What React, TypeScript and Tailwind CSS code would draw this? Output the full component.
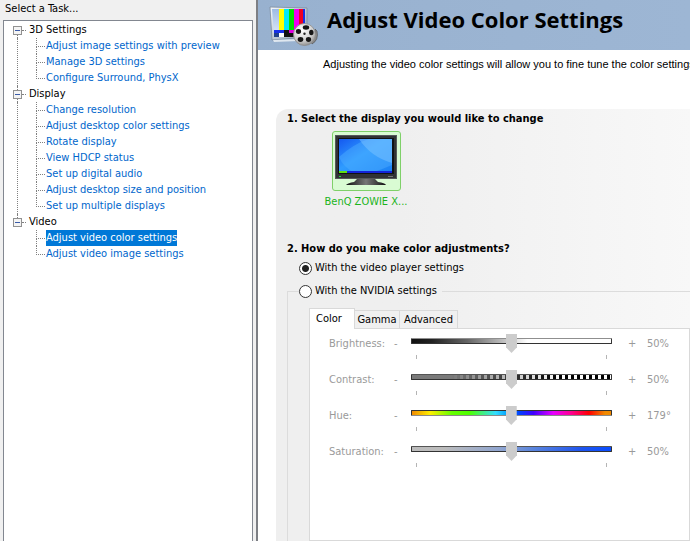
type Group = { title: string; items: string[] };

const groups: Group[] = [
  {
    title: "3D Settings",
    items: [
      "Adjust image settings with preview",
      "Manage 3D settings",
      "Configure Surround, PhysX",
    ],
  },
  {
    title: "Display",
    items: [
      "Change resolution",
      "Adjust desktop color settings",
      "Rotate display",
      "View HDCP status",
      "Set up digital audio",
      "Adjust desktop size and position",
      "Set up multiple displays",
    ],
  },
  {
    title: "Video",
    items: ["Adjust video color settings", "Adjust video image settings"],
  },
];

const selected = "Adjust video color settings";

const sliders = [
  {
    label: "Brightness:",
    value: 50,
    max: 100,
    text: "50%",
    track:
      "[&::-webkit-slider-runnable-track]:border-t-[#8f8f8f] [&::-webkit-slider-runnable-track]:bg-[linear-gradient(to_right,#111_0%,#222_10%,#666_28%,#bbb_45%,#fff_58%,#fff_100%)]",
  },
  {
    label: "Contrast:",
    value: 50,
    max: 100,
    text: "50%",
    track:
      "[&::-webkit-slider-runnable-track]:border-t-[#555] [&::-webkit-slider-runnable-track]:bg-[linear-gradient(to_right,#7a7a7a_0%,#7a7a7a_20%,transparent_75%),repeating-linear-gradient(to_right,#fff_0px,#fff_3px,#000_3px,#000_6px)]",
  },
  {
    label: "Hue:",
    value: 179,
    max: 359,
    text: "179°",
    track:
      "[&::-webkit-slider-runnable-track]:border-b-[#8a8a8a] [&::-webkit-slider-runnable-track]:bg-[linear-gradient(to_right,#f08a00_0%,#ffee00_9%,#66ff00_20%,#4dff00_29%,#33ddff_42%,#00a0ff_48%,#0040ff_54%,#4000ff_61%,#e800ff_71%,#ff0090_80%,#ff0000_89%,#f08a00_97%)]",
  },
  {
    label: "Saturation:",
    value: 50,
    max: 100,
    text: "50%",
    track:
      "[&::-webkit-slider-runnable-track]:border-t-[#555] [&::-webkit-slider-runnable-track]:bg-[linear-gradient(to_right,#bcbcbc_0%,#bcbcbc_16%,#8ea4d0_45%,#5c86dc_60%,#1f55ee_85%,#0a4dff_100%)]",
  },
];

function TaskTree() {
  return (
    <ul className="pt-px">
      {groups.map((group, g) => {
        const first = g === 0;
        const last = g === groups.length - 1;
        return (
          <li key={group.title}>
            <div className="flex h-4 items-center pl-[9px]">
              <div className="flex h-4 w-[9px] flex-col items-center">
                <span className={first ? "h-1" : "h-1 border-l border-dotted border-[#808080]"} />
                <button
                  type="button"
                  aria-label={"Collapse " + group.title}
                  className="flex size-[9px] shrink-0 items-center justify-center border border-[#919191] bg-[#f4f4f4]"
                >
                  <span className="h-px w-[5px] bg-[#3a5ba8]" />
                </button>
                <span className={last ? "flex-1" : "flex-1 border-l border-dotted border-[#808080]"} />
              </div>
              <span className="w-1 border-t border-dotted border-[#808080]" />
              <span className="pl-[3px] leading-4 text-black">{group.title}</span>
            </div>
            <ul
              className={
                last
                  ? "ml-[13px] border-l border-transparent pl-[18px]"
                  : "ml-[13px] border-l border-dotted border-[#808080] pl-[18px]"
              }
            >
              {group.items.map((item, i) => (
                <li key={item} className="flex h-4 items-center">
                  <div className="flex h-4 w-[9px] flex-col">
                    <span className="h-[9px] border-b border-l border-dotted border-[#808080]" />
                    <span
                      className={
                        i === group.items.length - 1
                          ? "flex-1"
                          : "flex-1 border-l border-dotted border-[#808080]"
                      }
                    />
                  </div>
                  <a
                    href="#"
                    className={
                      item === selected
                        ? "ml-px bg-[#0078d7] leading-4 whitespace-nowrap text-white"
                        : "ml-px leading-4 whitespace-nowrap text-[#0066cc]"
                    }
                  >
                    {item}
                  </a>
                </li>
              ))}
            </ul>
          </li>
        );
      })}
    </ul>
  );
}

function VideoIcon() {
  return (
    <svg width="50" height="43" viewBox="0 0 50 43" aria-hidden="true" className="shrink-0">
      <defs>
        <linearGradient id="frame" x1="0" y1="0" x2="1" y2="1">
          <stop offset="0" stopColor="#f4f8fc" />
          <stop offset="1" stopColor="#8fa0b4" />
        </linearGradient>
        <linearGradient id="glass" x1="0" y1="0" x2="0" y2="1">
          <stop offset="0" stopColor="#9dbbe4" />
          <stop offset="1" stopColor="#e4eefa" />
        </linearGradient>
        <radialGradient id="reel" cx="0.4" cy="0.3" r="0.8">
          <stop offset="0" stopColor="#ffffff" />
          <stop offset="0.6" stopColor="#cfcfcf" />
          <stop offset="1" stopColor="#7c7c7c" />
        </radialGradient>
      </defs>
      <path d="M1 3 L38 4 L38 33 L3 36 Z" fill="url(#frame)" stroke="#7c8a9a" strokeWidth="0.8" />
      <path d="M3 5 H10 V33 H5 Z" fill="url(#glass)" />
      <path d="M10 5 H15 V26 H10Z" fill="#ffff00" />
      <path d="M15 5 H20 V26 H15Z" fill="#00e8f8" />
      <path d="M20 5 H25 V26 H20Z" fill="#00e000" />
      <path d="M25 5 H30 V26 H25Z" fill="#f000f0" />
      <path d="M30 5 H34 V26 H30Z" fill="#f00020" />
      <path d="M34 5 H36 V26 H34Z" fill="#1830e8" />
      <path d="M5 26 H15 V29 H5Z" fill="#1830e8" />
      <path d="M15 26 H20 V29 H15Z" fill="#111" />
      <path d="M20 26 H26 V29 H20Z" fill="#e000e0" />
      <path d="M5 29 H10 V33 H5Z" fill="#20408c" />
      <path d="M10 29 H15 V33 H10Z" fill="#fff" />
      <path d="M15 29 H26 V33 H15Z" fill="#111" />
      <path d="M4 36 L30 35 L30 37 L5 38 Z" fill="#dfe7ef" />
      <path d="M42 37 Q47 34 46 25 L48 27 Q50 36 43 40 Z" fill="#8a8a8a" stroke="#4a4a4a" strokeWidth="0.6" />
      <circle cx="35.5" cy="30.5" r="11" fill="url(#reel)" stroke="#8c8c8c" strokeWidth="0.8" />
      <ellipse cx="37" cy="23.5" rx="3.2" ry="2.2" fill="#161616" />
      <ellipse cx="29.5" cy="27.5" rx="2.6" ry="2.4" fill="#161616" />
      <ellipse cx="42.3" cy="28.5" rx="2.2" ry="2.8" fill="#161616" />
      <ellipse cx="31.5" cy="35.5" rx="2.8" ry="2.4" fill="#161616" />
      <ellipse cx="39.5" cy="35.5" rx="2.6" ry="2.4" fill="#161616" />
      <circle cx="35.5" cy="29.8" r="1.2" fill="#222" />
    </svg>
  );
}

function MonitorIcon() {
  return (
    <svg width="62" height="52" viewBox="0 0 62 52" aria-hidden="true">
      <defs>
        <linearGradient id="screen" x1="0" y1="0" x2="1" y2="1">
          <stop offset="0" stopColor="#1458f0" />
          <stop offset="0.45" stopColor="#2f9cff" />
          <stop offset="1" stopColor="#1a80f4" />
        </linearGradient>
        <linearGradient id="stand" x1="0" y1="0" x2="1" y2="0">
          <stop offset="0" stopColor="#111" />
          <stop offset="0.5" stopColor="#777" />
          <stop offset="1" stopColor="#111" />
        </linearGradient>
      </defs>
      <path d="M22 44 H40 L43 47 Q50 48 51 50 H11 Q13 48 19 47 Z" fill="url(#stand)" />
      <rect x="0.5" y="0.5" width="61" height="43" fill="#303234" stroke="#55585a" />
      <rect x="3" y="3" width="56" height="36" fill="#101214" />
      <rect x="4" y="4" width="53" height="34" fill="url(#screen)" />
      <path d="M4 22 Q20 8 34 4 H57 V30 Q48 34 36 38 H20 Q8 32 4 22 Z" fill="#4fb0ff" opacity="0.45" />
      <path d="M24 4 H57 V28 Q36 22 24 4 Z" fill="#7cc4ff" opacity="0.5" />
      <rect x="4" y="36" width="53" height="2" fill="#1424d8" />
      <rect x="4" y="36" width="8" height="2" fill="#60e010" />
      <rect x="4" y="41" width="2" height="1" fill="#20e040" />
      <rect x="53" y="41" width="5" height="1" fill="#777" />
    </svg>
  );
}

const radio =
  "m-0 size-[13px] shrink-0 appearance-none rounded-full border border-[#333] bg-white checked:bg-[radial-gradient(circle,#222_3px,#fff_4px)]";

export default function App() {
  return (
    <div className="flex h-screen overflow-hidden bg-[#f0f0f0] font-['DejaVu_Sans_Condensed','DejaVu_Sans',sans-serif] text-[11px] text-black">
      <aside className="flex w-[256px] shrink-0 flex-col pr-[3px] pl-[3px]">
        <h2 className="h-5 pt-px pl-[2px] leading-4">Select a Task...</h2>
        <nav className="flex-1 border border-b-0 border-[#828790] bg-white">
          <TaskTree />
        </nav>
      </aside>

      <main className="flex min-w-0 flex-1 flex-col border-l-2 border-[#7d7f84] bg-white">
        <header className="flex h-[50px] shrink-0 items-start gap-2 bg-linear-to-r from-[#98b1cf] to-[#9db6d4] pt-1 pl-[11px]">
          <VideoIcon />
          <h1 className="font-['Open_Sans',sans-serif] text-[22px] leading-[30px] font-bold whitespace-nowrap">
            Adjust Video Color Settings
          </h1>
        </header>

        <p className="mt-1.5 h-4 shrink-0 overflow-hidden pl-[65px] font-['Liberation_Sans_Narrow','Arial_Narrow','Liberation_Sans',Arial,sans-serif] text-[11px] leading-4 whitespace-nowrap">
          Adjusting the video color settings will allow you to fine tune the color settings for
        </p>

        <div className="mt-[37px] ml-[18px] flex flex-1 flex-col rounded-tl-[12px] bg-linear-to-r from-[#efefef] from-30% to-[#f8f8f8] pt-0.5 pl-[11px]">
          <h2 className="leading-4 font-bold whitespace-nowrap">
            1. Select the display you would like to change
          </h2>
          <div className="mt-1 ml-9 flex w-[86px] flex-col items-center">
            <button
              type="button"
              aria-labelledby="display-name"
              className="flex h-[60px] w-[69px] items-center justify-center rounded-[3px] border border-[#7fd069] bg-[#d9fbd3]"
            >
              <MonitorIcon />
            </button>
            <span id="display-name" className="mt-[3px] leading-4 whitespace-nowrap text-[#1cb41c]">
              BenQ ZOWIE X...
            </span>
          </div>

          <h2 className="mt-[31px] leading-4 font-bold whitespace-nowrap">
            2. How do you make color adjustments?
          </h2>
          <label className="mt-[3px] ml-3 flex items-center gap-[3px] leading-4">
            <input type="radio" name="source" defaultChecked className={radio} />
            With the video player settings
          </label>

          <fieldset className="mt-[7px] flex flex-1 flex-col border-t border-l border-[#dcdcdc] pl-[21px]">
            <legend className="-ml-[10px] pr-[5px]">
              <label className="flex items-center gap-[3px] leading-4">
                <input type="radio" name="source" className={radio} />
                With the NVIDIA settings
              </label>
            </legend>

            <div role="tablist" className="mt-[9px] flex h-5 items-end">
              <button
                type="button"
                role="tab"
                aria-selected="true"
                className="relative -mb-px h-[21px] w-[46px] border border-b-0 border-[#d9d9d9] bg-white pr-1.5 leading-4"
              >
                Color
              </button>
              <button
                type="button"
                role="tab"
                aria-selected="false"
                className="h-[18px] w-[45px] border-t border-r border-[#d9d9d9] bg-[#f0f0f0] leading-4"
              >
                Gamma
              </button>
              <button
                type="button"
                role="tab"
                aria-selected="false"
                className="h-[18px] w-[58px] border-t border-r border-[#d9d9d9] bg-[#f0f0f0] leading-4"
              >
                Advanced
              </button>
            </div>

            <div role="tabpanel" className="flex-1 border border-[#d9d9d9] bg-white pt-1.5 pl-[19px] text-[#9a9a9a]">
              {sliders.map((s) => (
                <div key={s.label} className="flex h-9 items-start leading-[18px]">
                  <label htmlFor={s.label} className="w-[65px] whitespace-nowrap">
                    {s.label}
                  </label>
                  <span className="w-[17px]">-</span>
                  <div className="w-[201px]">
                    <input
                      id={s.label}
                      type="range"
                      min={0}
                      max={s.max}
                      defaultValue={s.value}
                      disabled
                      className={
                        "m-0 block h-3 w-full appearance-none bg-transparent [&::-webkit-slider-runnable-track]:h-1.5 [&::-webkit-slider-runnable-track]:rounded-[1px] [&::-webkit-slider-runnable-track]:border [&::-webkit-slider-runnable-track]:border-[#333] [&::-webkit-slider-thumb]:-mt-[5px] [&::-webkit-slider-thumb]:h-[19px] [&::-webkit-slider-thumb]:w-[11px] [&::-webkit-slider-thumb]:appearance-none [&::-webkit-slider-thumb]:bg-[#cccccc] [&::-webkit-slider-thumb]:[clip-path:polygon(0_0,100%_0,100%_70%,50%_100%,0_70%)] " +
                        s.track
                      }
                    />
                    <div className="mt-2 flex justify-between px-[5px]">
                      <span className="h-1 w-px bg-[#b4b4b4]" />
                      <span className="h-1 w-px bg-[#b4b4b4]" />
                    </div>
                  </div>
                  <span className="ml-4 w-[19px]">+</span>
                  <span>{s.text}</span>
                </div>
              ))}
            </div>
          </fieldset>
        </div>
      </main>
    </div>
  );
}
